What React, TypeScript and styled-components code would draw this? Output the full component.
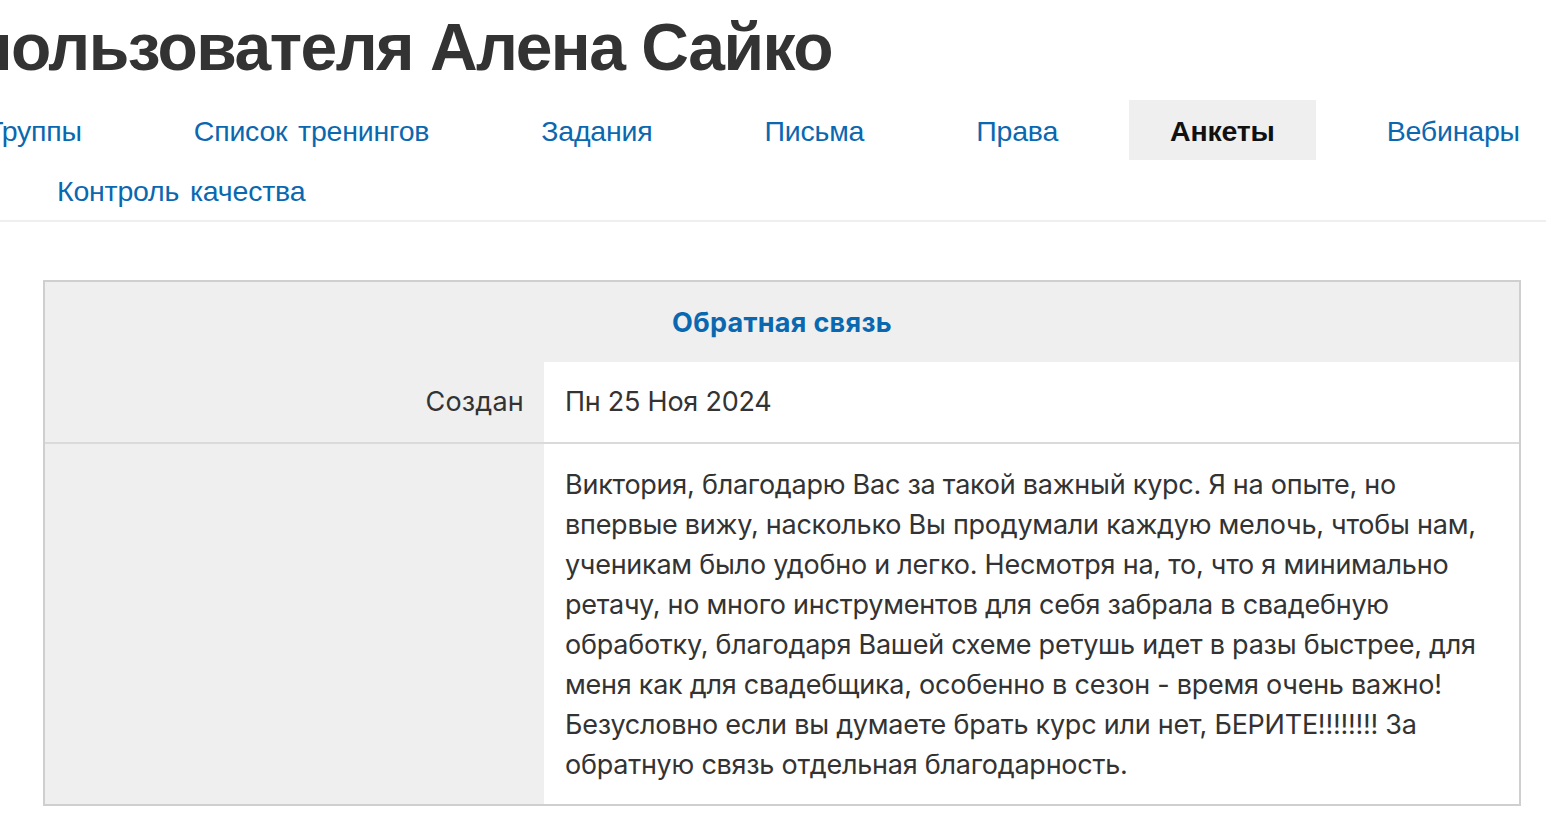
import React from "react";
import styled, { createGlobalStyle } from "styled-components";

const Global = createGlobalStyle`
  html, body { margin: 0; padding: 0; background: #fff; overflow: hidden; }
  body { font-family: "Inter", "Noto Sans", sans-serif; color: #333; }
`;

const Page = styled.div`
  width: 1546px;
  height: 836px;
  overflow: hidden;
`;

const HeadWrap = styled.div`
  width: 840px;
  height: 100px;
  overflow: hidden;
  display: flex;
  justify-content: flex-end;
`;

const Title = styled.h1`
  margin: 14px 8px 0 0;
  font-family: "Liberation Sans", Arial, sans-serif;
  font-weight: 700;
  font-size: 66px;
  line-height: 66px;
  color: #333;
  white-space: nowrap;
  letter-spacing: -1.5px;
`;

const Nav = styled.nav`
  border-bottom: 2px solid #efefef;
  height: 120px;
`;

const NavRow = styled.div<{ $offset: number }>`
  display: flex;
  gap: 30px;
  height: 60px;
  margin-left: ${(p) => p.$offset}px;
  white-space: nowrap;
`;

const Tab = styled.a<{ $active?: boolean }>`
  display: block;
  padding: 0 41px;
  height: 60px;
  line-height: 62px;
  font-family: "Liberation Sans", Arial, sans-serif;
  font-size: 28.5px;
  word-spacing: 3px;
  letter-spacing: -0.2px;
  font-weight: ${(p) => (p.$active ? 700 : 400)};
  color: ${(p) => (p.$active ? "#111" : "#0a68b0")};
  background: ${(p) => (p.$active ? "#efefef" : "transparent")};
  text-decoration: none;
  flex: none;
`;

const Card = styled.section`
  margin: 58px 0 0 43px;
  width: 1478px;
  box-sizing: border-box;
  border: 2px solid #cfcfcf;
`;

const CardHead = styled.div`
  height: 80px;
  background: #efefef;
  display: flex;
  align-items: center;
  justify-content: center;
  font-size: 27px;
  font-weight: 700;
  color: #0a68b0;
  letter-spacing: 0.3px;
`;

const Row = styled.div<{ $divider?: boolean }>`
  display: grid;
  grid-template-columns: 499px 1fr;
  border-top: ${(p) => (p.$divider ? "2px solid #dadada" : "none")};
`;

const Label = styled.div`
  background: #efefef;
  padding: 0 20px;
  font-size: 27px;
  line-height: 40px;
  display: flex;
  align-items: center;
  justify-content: flex-end;
  letter-spacing: 0.2px;
`;

const Value = styled.div<{ $tall?: boolean }>`
  background: #fff;
  padding: ${(p) => (p.$tall ? "21px 20px 19px 21px" : "20px 20px 20px 21px")};
  font-size: 27px;
  line-height: 40px;
  color: #333;
  letter-spacing: -0.25px;
`;

const lines = [
  "Виктория, благодарю Вас за такой важный курс. Я на опыте, но",
  "впервые вижу, насколько Вы продумали каждую мелочь, чтобы нам,",
  "ученикам было удобно и легко. Несмотря на, то, что я минимально",
  "ретачу, но много инструментов для себя забрала в свадебную",
  "обработку, благодаря Вашей схеме ретушь идет в разы быстрее, для",
  "меня как для свадебщика, особенно в сезон - время очень важно!",
  "Безусловно если вы думаете брать курс или нет, БЕРИТЕ!!!!!!!! За",
  "обратную связь отдельная благодарность.",
];

export default function App() {
  return (
    <Page>
      <Global />
      <HeadWrap>
        <Title>Анкеты пользователя Алена Сайко</Title>
      </HeadWrap>
      <Nav>
        <NavRow $offset={-53}>
          <Tab>Группы</Tab>
          <Tab>Список тренингов</Tab>
          <Tab>Задания</Tab>
          <Tab>Письма</Tab>
          <Tab>Права</Tab>
          <Tab $active>Анкеты</Tab>
          <Tab>Вебинары</Tab>
        </NavRow>
        <NavRow $offset={16}>
          <Tab>Контроль качества</Tab>
        </NavRow>
      </Nav>
      <Card>
        <CardHead>Обратная связь</CardHead>
        <Row>
          <Label>Создан</Label>
          <Value>Пн 25 Ноя 2024</Value>
        </Row>
        <Row $divider>
          <Label />
          <Value $tall>
            {lines.map((l, i) => (
              <React.Fragment key={i}>
                {l}
                {i < lines.length - 1 && <br />}
              </React.Fragment>
            ))}
          </Value>
        </Row>
      </Card>
    </Page>
  );
}
